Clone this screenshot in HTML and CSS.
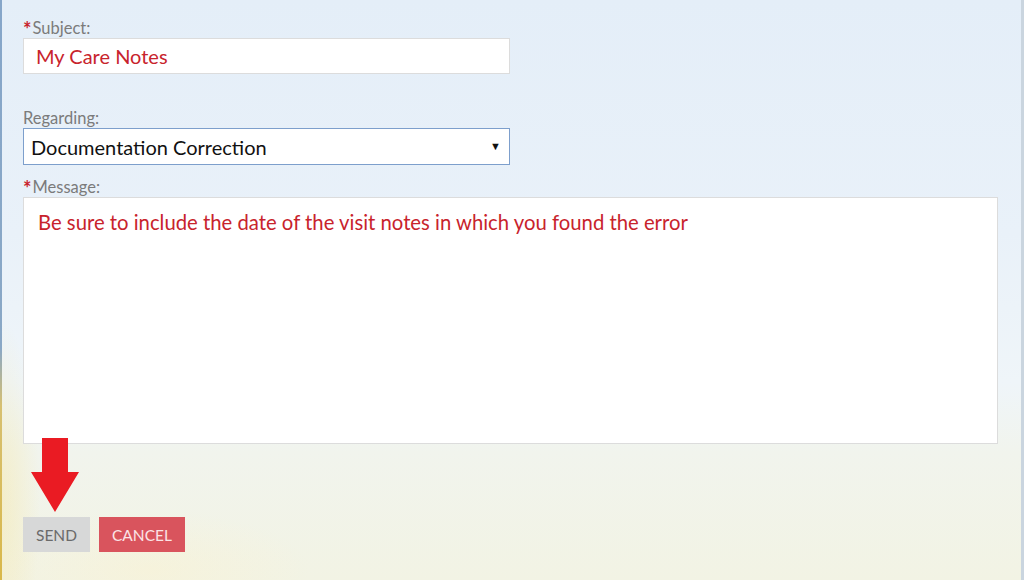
FILE: index.html
```html
<!DOCTYPE html>
<html>
<head>
<meta charset="utf-8">
<link rel="stylesheet" href="styles.css">
</head>
<body>
<div class="frame">
  <form class="form">
    <div class="field">
      <label class="label"><span class="req">*</span>Subject:</label>
      <input class="input" type="text" value="My Care Notes">
    </div>
    <div class="field field-regarding">
      <label class="label">Regarding:</label>
      <div class="select-wrap">
        <select class="select">
          <option>Documentation Correction</option>
        </select>
        <span class="caret">&#9660;</span>
      </div>
    </div>
    <div class="field field-message">
      <label class="label"><span class="req">*</span>Message:</label>
      <textarea class="textarea">Be sure to include the date of the visit notes in which you found the error</textarea>
    </div>
    <div class="actions">
      <svg class="pointer" width="50" height="76" viewBox="0 0 50 76">
        <polygon points="11,0 37,0 37,34 48,34 24,74 0,34 11,34" fill="#ea1b23"/>
      </svg>
      <button type="button" class="btn btn-send">SEND</button>
      <button type="button" class="btn btn-cancel">CANCEL</button>
    </div>
  </form>
</div>
</body>
</html>
```
FILE: styles.css
```css
html, body {
  margin: 0;
  padding: 0;
}
body {
  width: 1024px;
  height: 580px;
  overflow: hidden;
  font-family: Lato, "Open Sans", sans-serif;
}
.frame {
  box-sizing: border-box;
  width: 1024px;
  height: 580px;
  border-right: 3px solid #cad5df;
  background:
    linear-gradient(180deg, #86a6c9 0%, #8aa8c6 60%, #d7c070 70%, #d9b84a 100%) left top / 2px 100% no-repeat,
    radial-gradient(ellipse 40px 180px at 0px 500px, rgba(246, 230, 160, 0.45), rgba(246, 230, 160, 0) 100%),
    radial-gradient(ellipse 160px 60px at 150px 570px, rgba(250, 242, 210, 0.5), rgba(250, 242, 210, 0) 100%),
    linear-gradient(180deg, #e4eef8 0%, #e9f1f9 40%, #eff5f9 66%, #f1f4ed 78%, #f2f3e4 100%);
}
.form {
  padding: 18px 0 0 23px;
  display: flex;
  flex-direction: column;
}
.field {
  display: flex;
  flex-direction: column;
}
.field-regarding {
  margin-top: 34px;
}
.field-message {
  margin-top: 12px;
}
.label {
  display: block;
  height: 20px;
  line-height: 20px;
  font-size: 16.5px;
  color: #7b7b7b;
}
.req {
  display: inline-block;
  vertical-align: top;
  line-height: 22px;
  height: 20px;
  color: #c8232c;
  font-size: 20px;
  font-weight: bold;
  margin-right: 1px;
}
.input {
  box-sizing: border-box;
  width: 487px;
  height: 36px;
  margin: 0;
  border: 1px solid #dcdcdc;
  background: #fff;
  padding: 0 12px;
  font-family: Lato, "Open Sans", sans-serif;
  font-size: 20px;
  color: #c8232c;
  outline: none;
}
.select-wrap {
  position: relative;
  width: 487px;
  height: 37px;
}
.select {
  box-sizing: border-box;
  width: 487px;
  height: 37px;
  margin: 0;
  border: 1px solid #7d9fcc;
  border-radius: 0;
  background: #fff;
  padding: 0 0 0 7px;
  -webkit-appearance: none;
  appearance: none;
  font-family: Lato, "Open Sans", sans-serif;
  font-size: 20px;
  color: #111;
  outline: none;
}
.caret {
  position: absolute;
  right: 9px;
  top: 12px;
  font-size: 11px;
  line-height: 12px;
  color: #111;
  pointer-events: none;
}
.textarea {
  box-sizing: border-box;
  width: 975px;
  height: 247px;
  margin: 0;
  border: 1px solid #dcdcdc;
  background: #fff;
  padding: 12px 14px;
  resize: none;
  font-family: Lato, "Open Sans", sans-serif;
  font-size: 20.3px;
  line-height: 24px;
  color: #c8232c;
  outline: none;
}
.actions {
  position: relative;
  margin-top: 73px;
  display: flex;
  gap: 9px;
}
.pointer {
  position: absolute;
  left: 8px;
  top: -79px;
}
.btn {
  height: 35px;
  margin: 0;
  border: none;
  border-radius: 0;
  padding: 0;
  font-family: Lato, "Open Sans", sans-serif;
  font-size: 15.5px;
}
.btn-send {
  width: 67px;
  background: #d7d8d8;
  color: #6a6a6a;
}
.btn-cancel {
  width: 86px;
  background: #d9545d;
  color: #fbe4e6;
}
```
